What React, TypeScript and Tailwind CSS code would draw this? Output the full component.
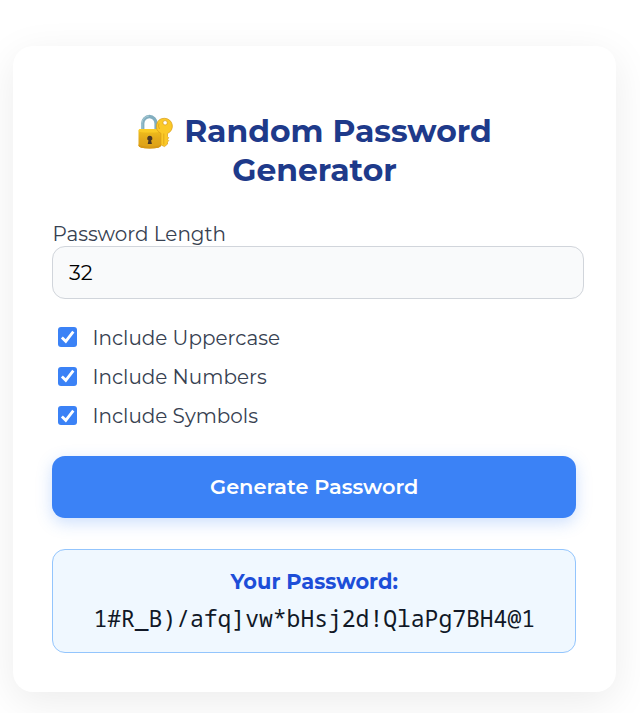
import { useState } from 'react';

function LockIcon() {
  return (
    <svg viewBox="0 0 36 36" className="inline-block h-9 w-9 shrink-0" aria-hidden="true">
      <defs>
        <linearGradient id="body" x1="0" y1="0" x2="0" y2="1">
          <stop offset="0" stopColor="#f2c21c" />
          <stop offset="0.5" stopColor="#e3aa1b" />
          <stop offset="1" stopColor="#dda016" />
        </linearGradient>
      </defs>
      <path d="M5.700 17V9.500a6.700 7 0 0 1 13.400 0v7.500" fill="none" stroke="#82aebf" strokeWidth="3.4" />
      <path d="M4.900 16V9.500a7.500 7.600 0 0 1 7-7.500" fill="none" stroke="#a8cbd5" strokeWidth="1" />
      <path d="M1.500 17q0-2 2-2h18.500q2 0 2 2v14.500q0 3-11.250 3T1.500 31.500Z" fill="url(#body)" />
      <path d="M1.500 17q0-2 2-2h18.500q2 0 2 2-1 1.500-11.250 1.500T1.500 17Z" fill="#facb25" />
      <path d="M1.500 30.500q3 2 11.250 2t11.250-2v1q0 3-11.250 3t-11.250-3Z" fill="#d69816" />
      <path d="M12.800 21.800a2.500 2.500 0 0 1 1.300 4.700l.8 3.500h-4.200l.8-3.500a2.500 2.500 0 0 1 1.300-4.700Z" fill="#493626" />
      <path fillRule="evenodd" d="M27.500 4.300a7.900 7.900 0 0 1 3 15.200v3l1.200 1.300-1.200 1.500 1.200 1.200-1.200 1.600v2l-3 2.500-3.600-1.700V19.300A7.900 7.900 0 0 1 27.500 4.300Zm.6 2.300a2.200 2.200 0 1 0 0 4.400 2.200 2.200 0 0 0 0-4.400Z" fill="#fbc928" stroke="#d89b18" strokeWidth=".7" />
      <path d="M26.800 19.500v11M22 9.500a6 6 0 0 0 .5 5.500" fill="none" stroke="#dca019" strokeWidth=".8" />
    </svg>
  );
}

function CheckRow({ label }: { label: string }) {
  const [on, setOn] = useState(true);
  return (
    <label className="flex h-[39.300px] items-center pl-[5.500px]">
      <input type="checkbox" checked={on} onChange={() => setOn(!on)} className="sr-only" />
      <span className="flex h-[19.500px] w-[19.500px] items-center justify-center rounded-[3px] bg-[#3b82f6]">
        {on && (
          <svg viewBox="0 0 20 20" className="h-5 w-5">
            <path d="M4 10.500 8 14.400 15.700 4.600" fill="none" stroke="#fff" strokeWidth="2.900" />
          </svg>
        )}
      </span>
      <span className="ml-[15.500px] pt-[3px] text-[19.950px] text-[#374151]">{label}</span>
    </label>
  );
}

export default function App() {
  return (
    <main className="h-[713px] overflow-hidden bg-white pt-[46px] pl-[13px] font-['Montserrat','Inter',sans-serif]">
      <section className="h-[646px] w-[603px] rounded-[20px] bg-white px-[39px] pt-[66px] shadow-[0_10px_40px_rgba(0,0,0,0.08)]">
        <h1 className="w-[525px] text-center text-[31.400px] leading-[39px] font-bold text-[#1e3a8a]">
          <span className="flex items-center justify-center gap-[11px]">
            <LockIcon />
            <span>Random Password</span>
          </span>
          <span className="block">Generator</span>
        </h1>
        <label htmlFor="length" className="mt-[32px] block h-[24px] pl-[0.500px] text-[19.950px] leading-[24px] text-[#374151]">
          Password Length
        </label>
        <input
          id="length"
          defaultValue="32"
          className="block h-[53px] w-[532px] rounded-[13px] border border-[#d1d5db] bg-[#f9fafb] px-4 text-[20.900px] text-black outline-none"
        />
        <div className="mt-[18.500px]">
          <CheckRow label="Include Uppercase" />
          <CheckRow label="Include Numbers" />
          <CheckRow label="Include Symbols" />
        </div>
        <button className="mt-[21px] block h-[61.500px] w-[524.400px] rounded-[13px] bg-[#3b82f6] text-[20.900px] font-semibold text-white shadow-[0_5px_16px_rgba(59,130,246,0.25)]">
          Generate Password
        </button>
        <div className="mt-[31.500px] h-[104px] w-[524.400px] rounded-[13px] border border-[#93c5fd] bg-[#f0f8ff] pt-[19px] text-center">
          <div className="text-[20.900px] leading-[26px] font-bold text-[#1d4ed8]">Your Password:</div>
          <div className="mt-[7.500px] font-['Noto_Sans_Mono','DejaVu_Sans_Mono',monospace] text-[23px] leading-[31px] whitespace-nowrap text-[#111827]">
            1#R_B)/afq]vw*bHsj2d!QlaPg7BH4@1
          </div>
        </div>
      </section>
    </main>
  );
}
